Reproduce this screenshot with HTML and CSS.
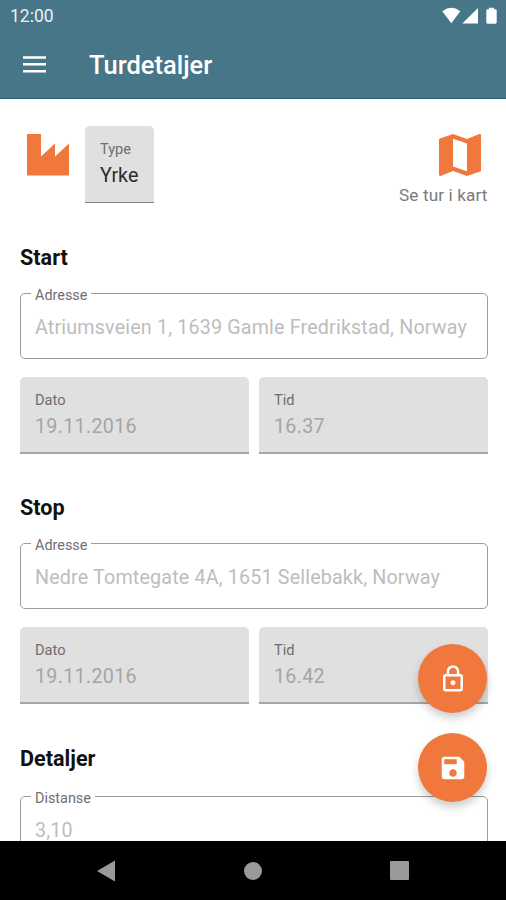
FILE: index.html
```
<!DOCTYPE html>
<html lang="no">
<head>
    <meta charset="UTF-8">
    <meta name="viewport" content="width=device-width, initial-scale=1.0">
    <title>Turdetaljer</title>
    <link rel="stylesheet" href="styles.css">
</head>
<body>
    <header>
        <div class="statusbar">
            <span class="clock">12:00</span>
            <svg class="status-icons" width="56" height="18" viewBox="0 0 56 18">
                <path d="M0.3 4.2Q9.3-2.6 18.3 4.2L9.3 16.2z"/>
                <path d="M36 1v15.4H20.3z"/>
                <path d="M47 2.2V.7h5v1.5h1.3q1.4 0 1.4 1.4v11.7q0 1.4-1.4 1.4h-7.6q-1.4 0-1.4-1.4V3.6q0-1.4 1.4-1.4z"/>
            </svg>
        </div>
        <div class="toolbar">
            <svg class="menu-icon" width="23" height="17" viewBox="0 0 23 17">
                <path d="M0 .2h23v2.5H0zM0 7h23v2.5H0zM0 13.9h23v2.5H0z"/>
            </svg>
            <h1>Turdetaljer</h1>
        </div>
    </header>

    <main>
        <div class="top">
            <svg class="factory" width="42" height="42" viewBox="0 0 42 42">
                <path d="M0 0h14v22.6L28 9.5v13.1L42 9.5V41.5H0z"/>
            </svg>
            <div class="filled type">
                <label>Type</label>
                <p>Yrke</p>
            </div>
            <div class="map">
                <svg width="42" height="42" viewBox="3 3 18 18">
                    <path d="M20.5 3l-.16.03L15 5.1 9 3 3.36 4.9c-.21.07-.36.25-.36.48V20.5c0 .28.22.5.5.5l.16-.03L9 18.9l6 2.1 5.64-1.9c.21-.07.36-.25.36-.48V3.5c0-.28-.22-.5-.5-.5zM15 19l-6-2.11V5l6 2.11V19z"/>
                </svg>
                <span>Se tur i kart</span>
            </div>
        </div>

        <section>
            <h2>Start</h2>
            <fieldset>
                <legend>Adresse</legend>
                <p>Atriumsveien 1, 1639 Gamle Fredrikstad, Norway</p>
            </fieldset>
            <div class="row">
                <div class="filled">
                    <label>Dato</label>
                    <p>19.11.2016</p>
                </div>
                <div class="filled">
                    <label>Tid</label>
                    <p>16.37</p>
                </div>
            </div>
        </section>

        <section>
            <h2>Stop</h2>
            <fieldset>
                <legend>Adresse</legend>
                <p>Nedre Tomtegate 4A, 1651 Sellebakk, Norway</p>
            </fieldset>
            <div class="row">
                <div class="filled">
                    <label>Dato</label>
                    <p>19.11.2016</p>
                </div>
                <div class="filled">
                    <label>Tid</label>
                    <p>16.42</p>
                </div>
            </div>
        </section>

        <section class="details">
            <h2>Detaljer</h2>
            <fieldset>
                <legend>Distanse</legend>
                <p>3,10</p>
            </fieldset>
        </section>

        <div class="fabs">
            <div class="fab">
                <svg width="30" height="30" viewBox="0 0 24 24">
                    <path d="M12 17c1.1 0 2-.9 2-2s-.9-2-2-2-2 .9-2 2 .9 2 2 2zm6-9h-1V6c0-2.76-2.24-5-5-5S7 3.24 7 6v2H6c-1.1 0-2 .9-2 2v10c0 1.1.9 2 2 2h12c1.1 0 2-.9 2-2V10c0-1.1-.9-2-2-2zM8.9 6c0-1.71 1.39-3.1 3.1-3.1s3.1 1.39 3.1 3.1v2H8.9V6zM18 20H6V10h12v10z"/>
                </svg>
            </div>
            <div class="fab">
                <svg width="30" height="30" viewBox="0 0 24 24">
                    <path d="M17 3H5c-1.11 0-2 .9-2 2v14c0 1.1.89 2 2 2h14c1.1 0 2-.9 2-2V7l-4-4zm-5 16c-1.66 0-3-1.34-3-3s1.34-3 3-3 3 1.34 3 3-1.34 3-3 3zm3-10H5V5h10v4z"/>
                </svg>
            </div>
        </div>
    </main>

    <nav>
        <svg width="18" height="22" viewBox="0 0 18 22"><path d="M0 11L18 .5v21z"/></svg>
        <svg width="18" height="18" viewBox="0 0 18 18"><circle cx="9" cy="9" r="9"/></svg>
        <svg width="19" height="19" viewBox="0 0 19 19"><rect width="19" height="19" rx="1"/></svg>
    </nav>
</body>
</html>
```
FILE: styles.css
```
* {
    margin: 0;
    padding: 0;
    box-sizing: border-box;
    font-family: Roboto, sans-serif;
}

body {
    background-color: #fff;
    display: flex;
    flex-direction: column;
    height: 900px;
    overflow: hidden;
}

header {
    background-color: #467687;
    border-bottom: 1px solid #2b6277;
    color: white;
    fill: white;
    height: 99px;
}

.statusbar {
    display: flex;
    justify-content: space-between;
    height: 32px;
    padding: 7px 8px 0 10px;
}

.clock {
    font-size: 17.5px;
    line-height: 19px;
    color: #e9f1f4;
}

.toolbar {
    display: flex;
    align-items: center;
    height: 66px;
    padding-left: 23px;
}

.menu-icon {
    margin-bottom: 1px;
}

h1 {
    margin-left: 43px;
    font-size: 25.5px;
    font-weight: 500;
}

main {
    position: relative;
    height: 742px;
    padding: 27px 18.5px 0 20px;
    overflow: hidden;
}

.top {
    display: flex;
    height: 77px;
    fill: #f1783c;
}

.factory {
    margin: 8px 16px 0 7px;
}

.filled {
    flex: 1;
    height: 76.5px;
    padding: 14px 15px 0;
    background-color: #e0e0e0;
    border-bottom: 2px solid #a6a6a6;
    border-radius: 5px 5px 0 0;
}

.filled label {
    display: block;
    font-size: 14.6px;
    line-height: 18px;
    color: #6e6e6e;
}

.filled p {
    margin-top: 5px;
    font-size: 19.7px;
    line-height: 25px;
    letter-spacing: 0.3px;
    color: #a5a5a5;
}

.type {
    flex: none;
    width: 69px;
    border-bottom: 1px solid #858585;
}

.type p {
    color: #2c2c2c;
    letter-spacing: 0;
}

.map {
    display: flex;
    flex-direction: column;
    align-items: flex-end;
    margin-left: auto;
    padding-top: 8px;
}

.map svg {
    flex-shrink: 0;
    margin-right: 7px;
}

.map span {
    margin-top: 9px;
    font-size: 17.2px;
    line-height: 20px;
    letter-spacing: 0.1px;
    color: #7b7b7b;
}

section {
    height: 250.4px;
    padding-top: 42px;
}

h2 {
    font-size: 21.6px;
    font-weight: 700;
    line-height: 26px;
    color: #111;
}

fieldset {
    height: 74px;
    min-width: 0;
    margin-top: 14px;
    padding: 0 10px;
    border: 1px solid #9c9c9c;
    border-radius: 5px;
}

legend {
    height: 16px;
    padding: 3px 4px 0;
    font-size: 14.4px;
    line-height: 16px;
    color: #707070;
}

fieldset p {
    margin-left: 4px;
    padding-top: 14px;
    font-size: 19.7px;
    line-height: 25px;
    letter-spacing: 0.17px;
    white-space: nowrap;
    color: #bdbdbd;
}

.row {
    display: flex;
    gap: 10.5px;
    margin-top: 18px;
}

.details fieldset {
    margin-top: 17px;
}

.details legend {
    padding-top: 2px;
}

.details fieldset p {
    padding-top: 15px;
    line-height: 21px;
}

/* floating buttons over the form */
.fabs {
    position: absolute;
    right: 19px;
    bottom: 39px;
    display: flex;
    flex-direction: column;
    gap: 20px;
}

.fab {
    display: flex;
    align-items: center;
    justify-content: center;
    width: 69px;
    height: 69px;
    border-radius: 50%;
    background-color: #f1783c;
    fill: white;
    box-shadow: 0 5px 9px rgba(0, 0, 0, 0.2);
}

nav {
    display: flex;
    align-items: center;
    justify-content: space-between;
    height: 59px;
    padding: 0 97px;
    background-color: #000;
    fill: #999;
}
```
